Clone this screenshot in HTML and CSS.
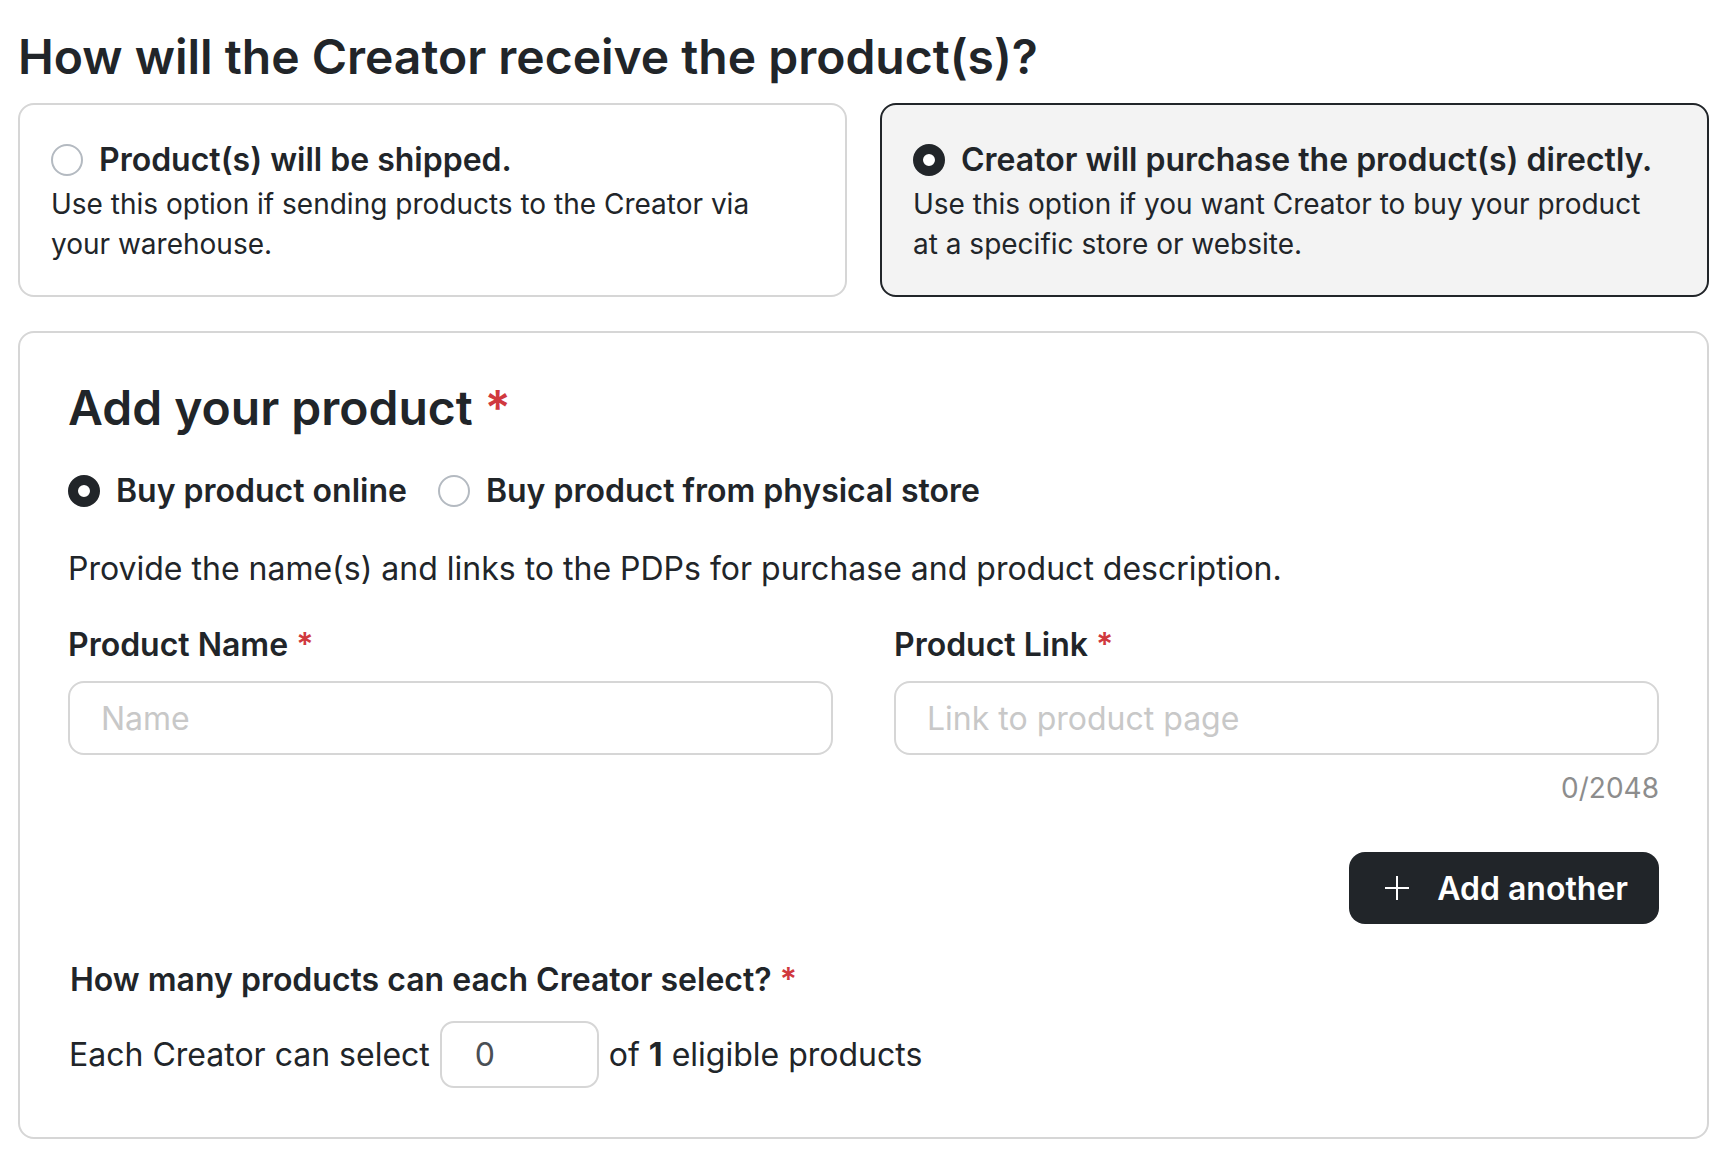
FILE: index.html
```html
<!DOCTYPE html>
<html lang="en">
<head>
<meta charset="utf-8">
<title>Creator product delivery</title>
<link rel="stylesheet" href="styles.css">
</head>
<body>
<div class="page">
  <h1 class="title">How will the Creator receive the product(s)?</h1>

  <div class="options">
    <div class="option">
      <div class="option-head">
        <span class="radio"></span>
        <span class="option-title">Product(s) will be shipped.</span>
      </div>
      <p class="option-desc">Use this option if sending products to the Creator via your warehouse.</p>
    </div>
    <div class="option selected">
      <div class="option-head">
        <span class="radio checked"></span>
        <span class="option-title">Creator will purchase the product(s) directly.</span>
      </div>
      <p class="option-desc">Use this option if you want Creator to buy your product at a specific store or website.</p>
    </div>
  </div>

  <section class="panel">
    <h2 class="panel-title">Add your product <span class="req">*</span></h2>

    <div class="choice-row">
      <label class="choice"><span class="radio checked"></span>Buy product online</label>
      <label class="choice"><span class="radio"></span>Buy product from physical store</label>
    </div>

    <p class="lead">Provide the name(s) and links to the PDPs for purchase and product description.</p>

    <div class="fields">
      <div class="field">
        <div class="field-label">Product Name <span class="req">*</span></div>
        <input class="text-input" type="text" placeholder="Name">
      </div>
      <div class="field">
        <div class="field-label">Product Link <span class="req">*</span></div>
        <input class="text-input" type="text" placeholder="Link to product page">
        <div class="counter">0/2048</div>
      </div>
    </div>

    <div class="actions">
      <button class="btn" type="button">
        <svg class="btn-icon" viewBox="0 0 26 26" width="26" height="26" aria-hidden="true">
          <path d="M13 1v24M1 13h24" stroke="#fff" stroke-width="2" fill="none"/>
        </svg>
        <span>Add another</span>
      </button>
    </div>

    <div class="limit-label">How many products can each Creator select? <span class="req">*</span></div>
    <div class="limit-row">
      <span>Each Creator can select</span>
      <input class="count-input" type="text" value="0">
      <span>of <b>1</b> eligible products</span>
    </div>
  </section>
</div>
</body>
</html>
```

FILE: styles.css
```css
* {
  box-sizing: border-box;
}

body {
  margin: 0;
  background: #ffffff;
}

.page {
  padding: 28px 19px 0 18px;
  font-family: Inter, "Noto Sans", "Liberation Sans", sans-serif;
  color: #212529;
}

.title {
  margin: 0;
  font-size: 48px;
  line-height: 58px;
  font-weight: 600;
}

.options {
  display: grid;
  grid-template-columns: 1fr 1fr;
  gap: 33px;
  margin-top: 17px;
}

.option {
  border: 2px solid #d6d6d6;
  border-radius: 16px;
  padding: 35px 44px 31px 31px;
  background: #ffffff;
}

.option.selected {
  background: #f3f3f3;
  border-color: #212529;
}

.option-head {
  display: flex;
  align-items: center;
  gap: 16px;
}

.radio {
  flex: none;
  width: 32px;
  height: 32px;
  border-radius: 50%;
  border: 2px solid #b4bac1;
  background: #ffffff;
}

.radio.checked {
  border: 10px solid #212529;
  background: #ffffff;
}

.option-title {
  font-size: 32px;
  line-height: 40px;
  font-weight: 600;
}

.option-desc {
  margin: 4px 0 0;
  font-size: 28px;
  line-height: 40px;
}

.panel {
  margin-top: 34px;
  border: 2px solid #d6d6d6;
  border-radius: 16px;
  padding: 46px 48px 49px;
}

.panel-title {
  margin: 0;
  font-size: 48px;
  line-height: 58px;
  font-weight: 600;
}

.req {
  color: #d0393e;
}

.choice-row {
  display: flex;
  gap: 31px;
  margin-top: 34px;
}

.choice {
  display: flex;
  align-items: center;
  gap: 16px;
  font-size: 32px;
  line-height: 40px;
  font-weight: 600;
}

.lead {
  margin: 38px 0 0;
  font-size: 32px;
  line-height: 40px;
}

.fields {
  display: grid;
  grid-template-columns: 1fr 1fr;
  gap: 61px;
  margin-top: 36px;
}

.field-label {
  font-size: 32px;
  line-height: 40px;
  font-weight: 600;
}

.text-input {
  display: block;
  width: 100%;
  height: 74px;
  margin-top: 16px;
  border: 2px solid #d6d6d6;
  border-radius: 16px;
  padding: 0 31px;
  font-family: inherit;
  font-size: 32px;
  color: #212529;
  background: #ffffff;
  outline: none;
}

.text-input::placeholder {
  color: #c8c8c8;
}

.counter {
  margin-top: 13px;
  text-align: right;
  font-size: 28px;
  line-height: 40px;
  color: #8d8d8d;
}

.actions {
  display: flex;
  justify-content: flex-end;
  margin-top: 44px;
}

.btn {
  display: flex;
  align-items: center;
  gap: 27px;
  height: 72px;
  padding: 0 31px 0 35px;
  border: none;
  border-radius: 16px;
  background: #212529;
  color: #ffffff;
  font-family: inherit;
  font-size: 32px;
  font-weight: 600;
}

.btn-icon {
  display: block;
}

.limit-label {
  margin-top: 36px;
  padding-left: 2px;
  font-size: 32px;
  line-height: 40px;
  font-weight: 600;
}

.limit-row {
  display: flex;
  align-items: center;
  gap: 10px;
  margin-top: 21px;
  padding-left: 1px;
  font-size: 32px;
  line-height: 40px;
}

.limit-row b {
  font-weight: 700;
}

.count-input {
  width: 159px;
  height: 67px;
  border: 2px solid #d6d6d6;
  border-radius: 14px;
  padding: 0 33px;
  font-family: inherit;
  font-size: 32px;
  color: #4a4f55;
  background: #ffffff;
  outline: none;
}
```
